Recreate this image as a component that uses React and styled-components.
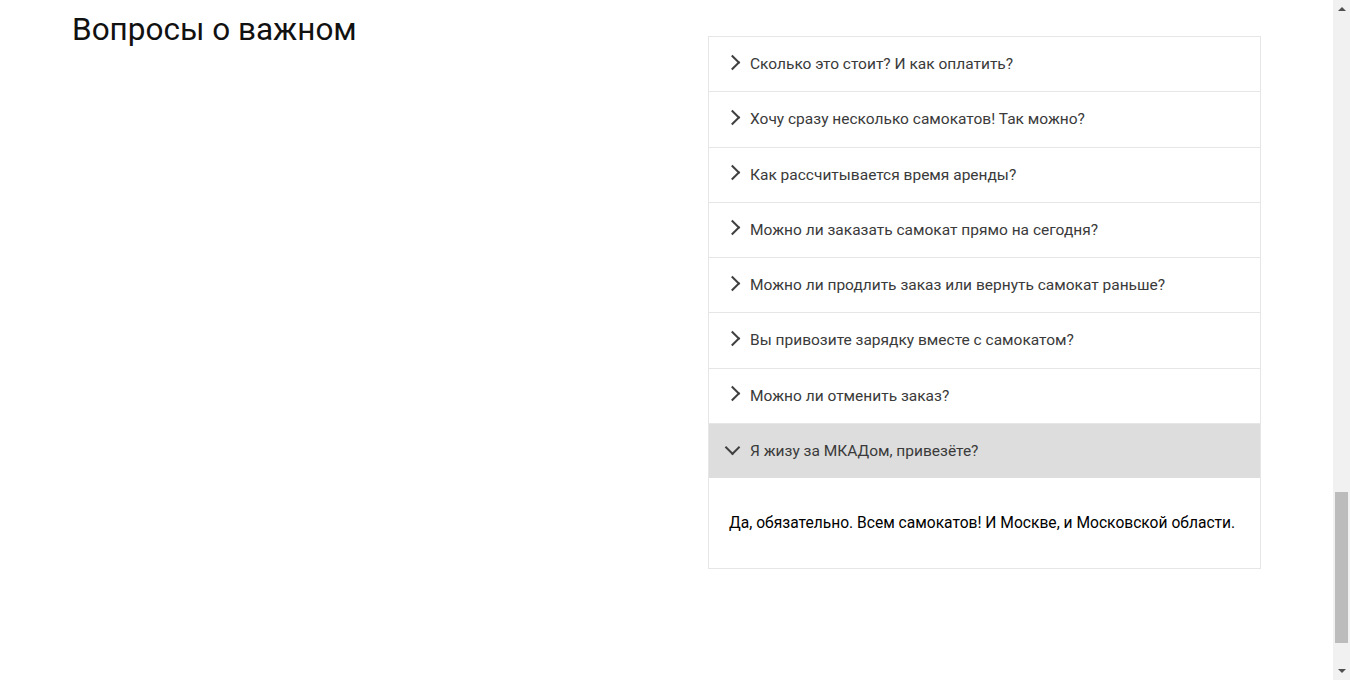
import React, { useLayoutEffect, useRef, useState } from "react";
import styled, { createGlobalStyle } from "styled-components";

const GlobalStyle = createGlobalStyle`
  html, body {
    margin: 0;
    padding: 0;
    height: 100%;
    overflow: hidden;
    background: #fff;
  }
  body {
    font-family: Roboto, "Noto Sans", sans-serif;
    color: #000;
  }
`;

const questions = [
  {
    q: "Сколько это стоит? И как оплатить?",
    a: "Сутки — 400 рублей. Оплата курьеру — наличными или картой.",
  },
  {
    q: "Хочу сразу несколько самокатов! Так можно?",
    a: "Пока что у нас так: один заказ — один самокат.",
  },
  {
    q: "Как рассчитывается время аренды?",
    a: "Допустим, вы оформляете заказ на 8 мая. Мы привозим самокат 8 мая в течение дня.",
  },
  {
    q: "Можно ли заказать самокат прямо на сегодня?",
    a: "Только начиная с завтрашнего дня. Но скоро станем расторопнее.",
  },
  {
    q: "Можно ли продлить заказ или вернуть самокат раньше?",
    a: "Пока что нет! Но если что-то срочное — всегда можно позвонить в поддержку по красивому номеру 1010.",
  },
  {
    q: "Вы привозите зарядку вместе с самокатом?",
    a: "Самокат приезжает к вам с полной зарядкой.",
  },
  {
    q: "Можно ли отменить заказ?",
    a: "Да, пока самокат не привезли. Штрафа не будет.",
  },
  {
    q: "Я жизу за МКАДом, привезёте?",
    a: "Да, обязательно. Всем самокатов! И Москве, и Московской области.",
  },
];

const SCROLL_TOP = 2139;

export default function App() {
  const [open, setOpen] = useState(7);
  const [thumb, setThumb] = useState({ top: 0, size: 1 });
  const viewRef = useRef(null);

  // the page is scrolled down to the FAQ block
  useLayoutEffect(() => {
    const el = viewRef.current;
    if (!el) return;
    el.scrollTop = SCROLL_TOP;
    setThumb({
      top: el.scrollTop / el.scrollHeight,
      size: el.clientHeight / el.scrollHeight,
    });
  }, []);

  return (
    <>
      <GlobalStyle />
      <Window>
        <Viewport ref={viewRef}>
          <Above />
          <Faq>
            <Title>Вопросы о важном</Title>
            <Accordion>
              {questions.map((item, i) => (
                <Item key={i}>
                  <Heading $open={open === i} onClick={() => setOpen(open === i ? -1 : i)}>
                    <Chevron $open={open === i} />
                    {item.q}
                  </Heading>
                  {open === i && (
                    <Panel>
                      <p>{item.a}</p>
                    </Panel>
                  )}
                </Item>
              ))}
            </Accordion>
          </Faq>
        </Viewport>
        <ScrollBar>
          <ArrowButton>
            <Arrow $dir="up" />
          </ArrowButton>
          <Track>
            <Thumb
              style={{
                top: `${thumb.top * 100}%`,
                height: `${thumb.size * 100}%`,
              }}
            />
          </Track>
          <ArrowButton>
            <Arrow $dir="down" />
          </ArrowButton>
        </ScrollBar>
      </Window>
    </>
  );
}

const Window = styled.div`
  display: flex;
  height: 100vh;
`;

const Viewport = styled.main`
  flex: 1;
  min-width: 0;
  overflow: hidden;
`;

/* the sections above the FAQ are scrolled out of view */
const Above = styled.div`
  height: 2147px;
`;

const Faq = styled.section`
  display: flex;
  justify-content: space-between;
  align-items: flex-start;
  padding: 0 72px 200px;
`;

const Title = styled.h2`
  margin: 0;
  font-family: Roboto, "Noto Sans", sans-serif;
  font-size: 31.5px;
  font-weight: 400;
  line-height: 44px;
  color: #111;
`;

const Accordion = styled.div`
  width: 551px;
  margin-top: 28px;
  border: 1px solid #e6e6e6;
`;

const Item = styled.div`
  & + & {
    border-top: 1px solid #e6e6e6;
  }
`;

const Heading = styled.div`
  display: flex;
  align-items: center;
  gap: 12px;
  padding: 17px 20px;
  line-height: 20.25px;
  font-size: 15.5px;
  color: #3a3a3a;
  background: ${(p) => (p.$open ? "#dddddd" : "#fff")};
  cursor: pointer;
`;

const Chevron = styled.span`
  flex: none;
  width: 9px;
  height: 9px;
  margin-left: -2px;
  border-right: 2px solid #404040;
  border-bottom: 2px solid #404040;
  transform: ${(p) =>
    p.$open ? "translateY(-3px) rotate(45deg)" : "translateY(-2px) rotate(-45deg)"};
`;

const Panel = styled.div`
  padding: 35px 20px;
  p {
    margin: 0;
    font-size: 15.6px;
    line-height: 20px;
    color: #000;
  }
`;

const ScrollBar = styled.div`
  flex: none;
  width: 17px;
  display: flex;
  flex-direction: column;
  background: #f1f1f1;
`;

const ArrowButton = styled.div`
  flex: none;
  height: 17px;
  display: flex;
  align-items: center;
  justify-content: center;
`;

const Arrow = styled.span`
  width: 0;
  height: 0;
  border-left: 4px solid transparent;
  border-right: 4px solid transparent;
  ${(p) =>
    p.$dir === "up"
      ? "border-bottom: 4px solid #505050; margin-top: 1px;"
      : "border-top: 4px solid #505050; margin-bottom: 1px;"}
`;

const Track = styled.div`
  flex: 1;
  position: relative;
`;

const Thumb = styled.div`
  position: absolute;
  left: 2px;
  right: 2px;
  background: #bcbcbc;
`;
